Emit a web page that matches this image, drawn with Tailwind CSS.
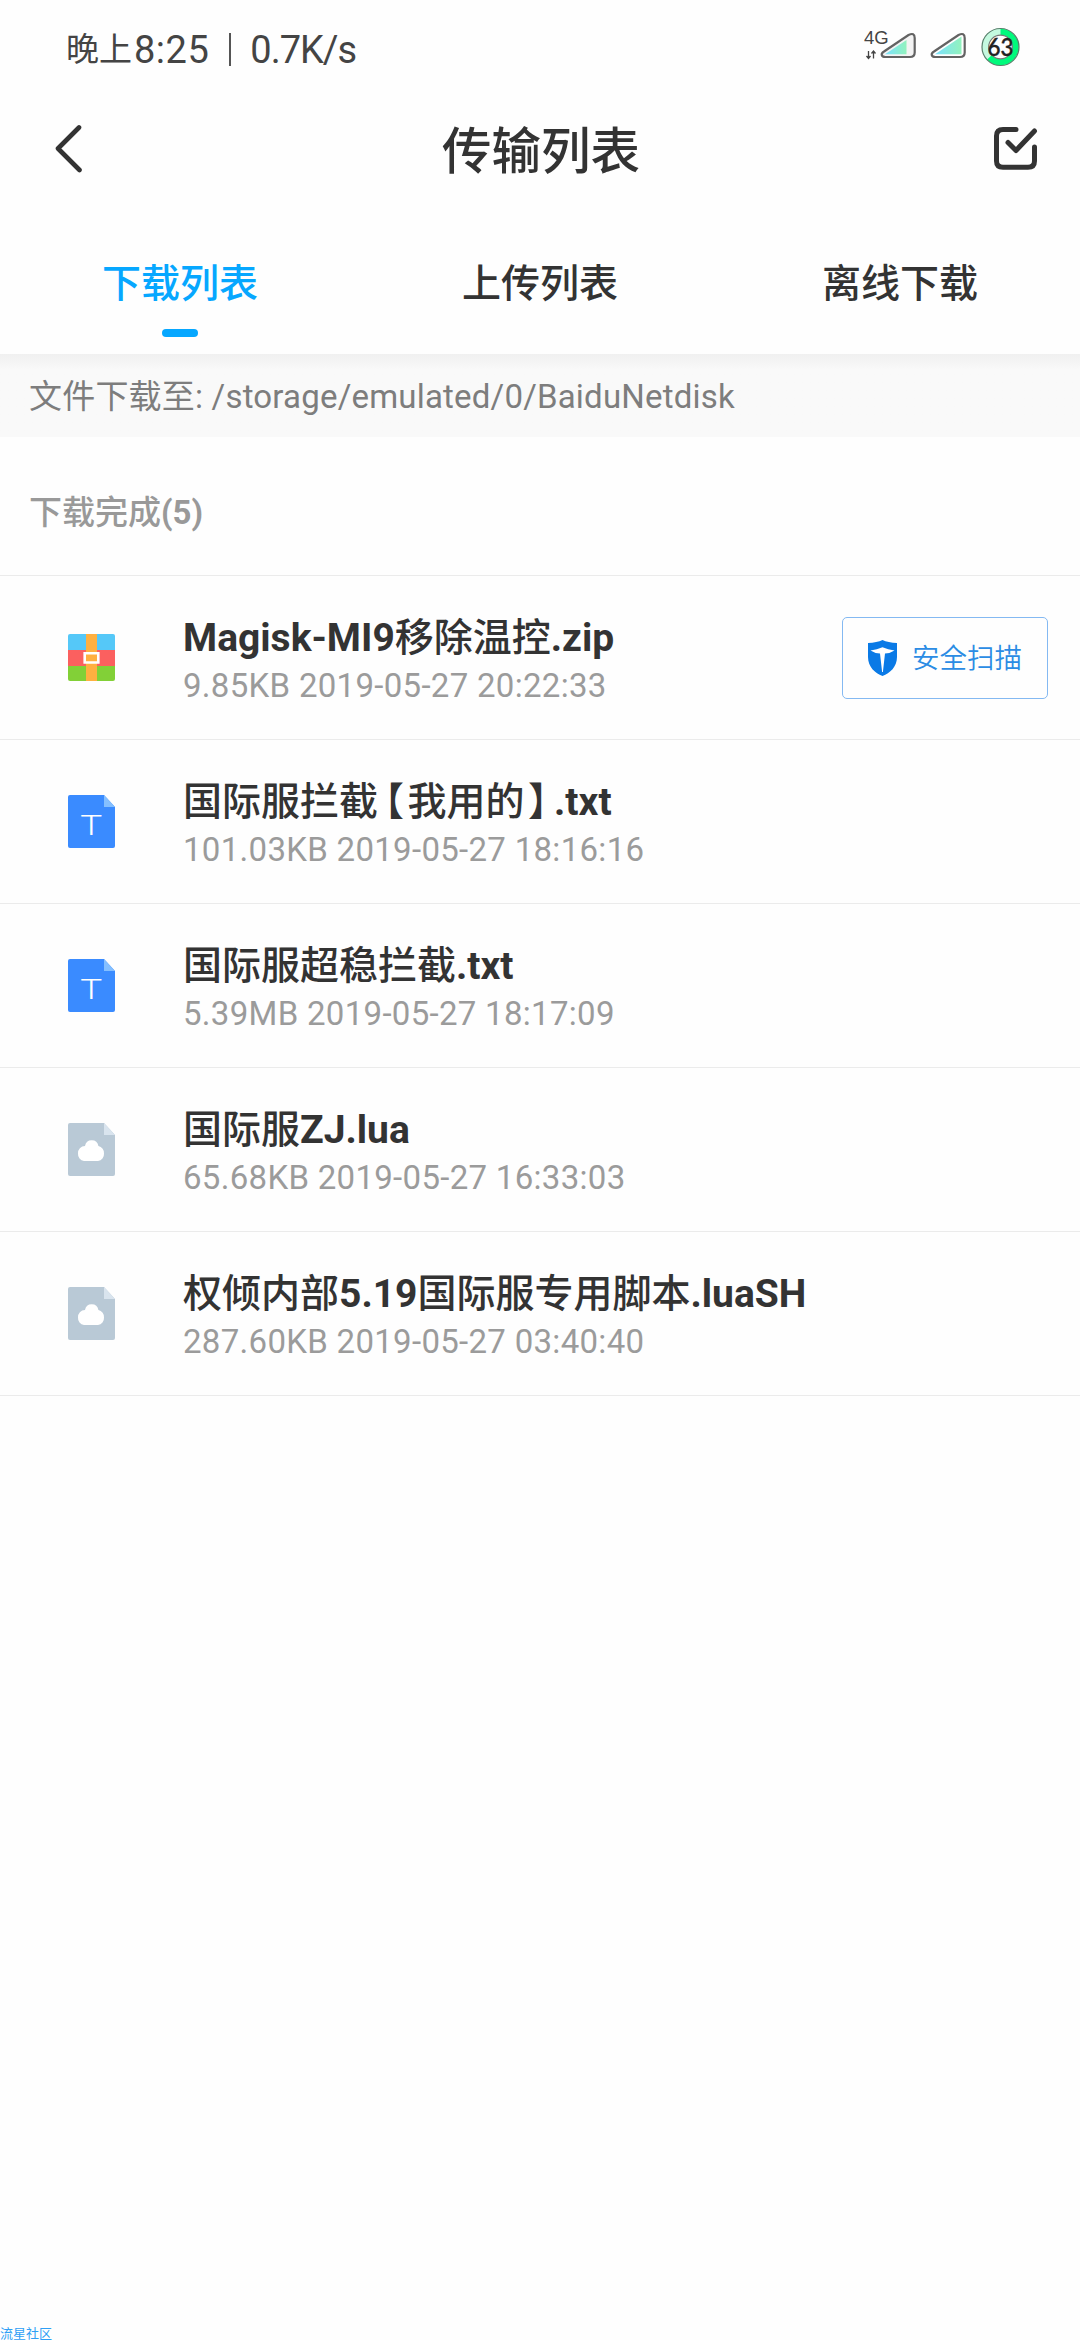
<!DOCTYPE html>
<html lang="zh-CN">
<head>
<meta charset="utf-8">
<title>传输列表</title>
<script src="https://cdn.jsdelivr.net/npm/@tailwindcss/browser@4"></script>
</head>
<body class="bg-[#fefefe]">
<svg class="hidden">
  <symbol id="doc-txt" viewBox="0 0 47 53">
    <path d="M2 0H36L47 12V51a2 2 0 0 1-2 2H2a2 2 0 0 1-2-2V2a2 2 0 0 1 2-2z" fill="#3a8bff"/>
    <path d="M36 0L47 12H36z" fill="#84bfff"/>
  </symbol>
  <symbol id="doc-other" viewBox="0 0 47 53">
    <path d="M2 0H36L47 12V51a2 2 0 0 1-2 2H2a2 2 0 0 1-2-2V2a2 2 0 0 1 2-2z" fill="#b9c9d6"/>
    <path d="M36 0L47 12H36z" fill="#d9e4ee"/>
    <path d="M16 38a7 7 0 0 1-6-7.500a7 7 0 0 1 7-7.500a6.800 6.800 0 0 1 13.400 0a7 7 0 0 1 5.600 7.500a7 7 0 0 1-6 7.500z" fill="#fff"/>
  </symbol>
</svg>
<main class="flex h-[2340px] w-[1080px] flex-col overflow-hidden font-['Roboto','Noto_Sans_CJK_SC',sans-serif] text-[#333]">

  <!-- status bar -->
  <div class="flex h-24 items-center justify-between pr-[59px] pl-[66px] text-[#444]">
    <div class="flex h-12 items-center whitespace-nowrap text-[38px] leading-[48px]">
      <span class="pb-0.5 text-[33px] font-['Noto_Sans_CJK_SC',sans-serif]">晚上</span>
      <span class="ml-0.5 pt-[3px] tracking-[0.5px]">8:25</span>
      <span class="mr-[19px] ml-5 mt-0.5 h-[33px] w-0.5 bg-[#555]"></span>
      <span class="pt-[3px] tracking-[-1px]">0.7K/s</span>
    </div>
    <svg class="h-12 w-[160px]" viewBox="861 24 160 48">
      <defs>
        <linearGradient id="sig" x1="0" x2="1"><stop offset="0" stop-color="#7be2ff"/><stop offset="1" stop-color="#92f2bd"/></linearGradient>
      </defs>
      <text x="864" y="44" font-size="18.500" fill="#444" font-family="Liberation Sans">4G</text>
      <path d="M868.500 51v7M866.500 56l2 2.500l2-2.500M873.500 58.500v-7M871.500 53.500l2-2.500l2 2.500" fill="none" stroke="#444" stroke-width="1.300"/>
      <path d="M884 51.500L908.500 35Q914.700 32 914.700 38V52.500Q914.700 57 910 57H885.500C881 57 880.500 53.500 884 51.500z" fill="#f3f3f3" stroke="#636363" stroke-width="2.200"/>
      <path d="M885 54.200L906.500 40V54.200z" fill="url(#sig)"/>
      <path d="M934 51.500L958.500 35Q964.700 32 964.700 38V52.500Q964.700 57 960 57H935.500C931 57 930.500 53.500 934 51.500z" fill="#fefefe" stroke="#636363" stroke-width="2.200"/>
      <path d="M935 54.200L961.500 36.500V54.200z" fill="url(#sig)"/>
      <circle cx="1000.500" cy="47" r="15" fill="none" stroke="#c4f9df" stroke-width="6.500"/>
      <path d="M1000.500 32A15 15 0 1 1 989.500 57.200" fill="none" stroke="#00fa7c" stroke-width="6.500"/>
      <circle cx="1000.500" cy="47" r="18.500" fill="none" stroke="#56806b" stroke-width="1.200"/>
      <circle cx="1000.500" cy="47" r="11.800" fill="#fefefe" stroke="#777" stroke-width="1.200"/>
      <text x="1000.500" y="55.500" text-anchor="middle" font-size="25" font-weight="500" fill="#222" stroke="#222" stroke-width=".4" font-family="Lato" textLength="26" lengthAdjust="spacingAndGlyphs">63</text>
    </svg>
  </div>

  <!-- title bar -->
  <header class="flex h-[104px] items-center justify-between pr-[40px] pl-[53px]">
    <svg class="h-[50px] w-[47px]" viewBox="53 123 47 50" fill="none" stroke="#333" stroke-width="4.600" stroke-linecap="round" stroke-linejoin="round"><path d="M79 127.500L58 148.500L79.500 170"/></svg>
    <h1 class="mr-2 pt-[9px] text-[49.5px] leading-none font-medium">传输列表</h1>
    <svg class="h-[50px] w-[50px]" viewBox="990 123 50 50" fill="none" stroke="#333" stroke-width="5" stroke-linecap="round" stroke-linejoin="round"><path d="M1016 129.500H1003Q996.500 129.500 996.500 136V161Q996.500 167.300 1003 167.300H1028Q1034.500 167.300 1034.500 161V147"/><path d="M1008 142.500L1016 150.500L1034.500 131"/></svg>
  </header>

  <!-- tabs -->
  <nav class="grid h-[154px] grid-cols-3 text-center text-[39px] leading-[56px] font-medium">
    <div class="flex flex-col items-center pt-[56px] text-[#06a7ff]"><span>下载列表</span><i class="mt-[17px] h-2 w-9 rounded-full bg-[#06a7ff]"></i></div>
    <div class="pt-[56px]">上传列表</div>
    <div class="pt-[56px]">离线下载</div>
  </nav>

  <div class="flex h-[83px] items-center bg-[#f9f9f9] bg-linear-to-b from-[#f0f0f0] to-[#f9f9f9] to-[16px] pt-0.5 pl-[29px] text-[33px] tracking-[0.2px] text-[#7d7d7d]">文件下载至: /storage/emulated/0/BaiduNetdisk</div>
  <h2 class="flex h-[139px] items-center border-b border-[#ebebeb] pt-[14px] pl-[29px] text-[33px] font-medium text-[#999]">下载完成<b>(5)</b></h2>

  <ul>
    <li class="flex h-[164px] items-center border-b border-[#ebebeb] pr-8 pl-[68px]">
      <svg class="h-[47px] w-[47px]" viewBox="0 0 47 47">
        <path d="M0 16V2a2 2 0 0 1 2-2H45a2 2 0 0 1 2 2V16z" fill="#55c8f8"/>
        <path d="M0 16H47V32H0z" fill="#fb605f"/>
        <path d="M0 32H47V45a2 2 0 0 1-2 2H2a2 2 0 0 1-2-2z" fill="#82d037"/>
        <path d="M18 0H29V47H18z" fill="#ffb040"/>
        <path d="M16.700 19.300H30.300V28.500H16.700z" fill="#ffb040" stroke="#fff" stroke-width="2.600"/>
      </svg>
      <div class="ml-[68px] flex-1 pt-[3px] whitespace-nowrap">
        <p class="pt-0.5 text-[39px] leading-[52px] font-medium"><b>Magisk-MI9</b>移除温控<b>.zip</b></p>
        <p class="text-[33px] leading-[44px] tracking-[0.3px] text-[#9b9b9b]">9.85KB 2019-05-27 20:22:33</p>
      </div>
      <button class="flex h-[82px] w-[206px] items-center rounded-[5px] border border-[#84b9f2] pl-[25px] text-[27.5px] font-[350] text-[#2b8ce4]">
        <svg class="mr-[15px] h-9 w-[29px]" viewBox="0 0 29 36">
          <path d="M14.500 0Q20 2.500 29 3V17C29 27 22 33 14.500 36C7 33 0 27 0 17V3Q9 2.500 14.500 0z" fill="#0a7ae6"/>
          <path d="M2.500 10.500Q9 9.500 14.500 7.300Q20 9.500 26.500 10.500Q22 13.500 17 13.500L14.900 32H14.100L12 13.500Q7 13.500 2.500 10.500z" fill="#fff"/>
        </svg>
        <span class="pt-0.5">安全扫描</span>
      </button>
    </li>
    <li class="flex h-[164px] items-center border-b border-[#ebebeb] pl-[68px]">
      <svg class="h-[53px] w-[47px]" viewBox="0 0 47 53"><use href="#doc-txt"/><text x="23.300" y="40" text-anchor="middle" font-size="28.500" font-weight="300" fill="#fff" textLength="22" lengthAdjust="spacingAndGlyphs">T</text></svg>
      <div class="ml-[68px] pt-[3px] whitespace-nowrap">
        <p class="pt-0.5 text-[39px] leading-[52px] font-medium">国际服拦截<span class="mr-[3.5px] ml-[6.5px] [font-feature-settings:'halt']">【</span>我用的<span class="mr-[6.5px] ml-[3.5px] [font-feature-settings:'halt']">】</span><b>.txt</b></p>
        <p class="text-[33px] leading-[44px] tracking-[0.3px] text-[#9b9b9b]">101.03KB 2019-05-27 18:16:16</p>
      </div>
    </li>
    <li class="flex h-[164px] items-center border-b border-[#ebebeb] pl-[68px]">
      <svg class="h-[53px] w-[47px]" viewBox="0 0 47 53"><use href="#doc-txt"/><text x="23.300" y="40" text-anchor="middle" font-size="28.500" font-weight="300" fill="#fff" textLength="22" lengthAdjust="spacingAndGlyphs">T</text></svg>
      <div class="ml-[68px] pt-[3px] whitespace-nowrap">
        <p class="pt-0.5 text-[39px] leading-[52px] font-medium">国际服超稳拦截<b>.txt</b></p>
        <p class="text-[33px] leading-[44px] tracking-[0.3px] text-[#9b9b9b]">5.39MB 2019-05-27 18:17:09</p>
      </div>
    </li>
    <li class="flex h-[164px] items-center border-b border-[#ebebeb] pl-[68px]">
      <svg class="h-[53px] w-[47px]"><use href="#doc-other"/></svg>
      <div class="ml-[68px] pt-[3px] whitespace-nowrap">
        <p class="pt-0.5 text-[39px] leading-[52px] font-medium">国际服<b>ZJ.lua</b></p>
        <p class="text-[33px] leading-[44px] tracking-[0.3px] text-[#9b9b9b]">65.68KB 2019-05-27 16:33:03</p>
      </div>
    </li>
    <li class="flex h-[164px] items-center border-b border-[#ebebeb] pl-[68px]">
      <svg class="h-[53px] w-[47px]"><use href="#doc-other"/></svg>
      <div class="ml-[68px] pt-[3px] whitespace-nowrap">
        <p class="pt-0.5 text-[39px] leading-[52px] font-medium">权倾内部<b>5.19</b>国际服专用脚本<b>.luaSH</b></p>
        <p class="text-[33px] leading-[44px] tracking-[0.3px] text-[#9b9b9b]">287.60KB 2019-05-27 03:40:40</p>
      </div>
    </li>
  </ul>

  <footer class="mt-auto text-[13px] leading-[13px] text-[#2f9ff5]">流星社区</footer>
</main>
</body>
</html>
